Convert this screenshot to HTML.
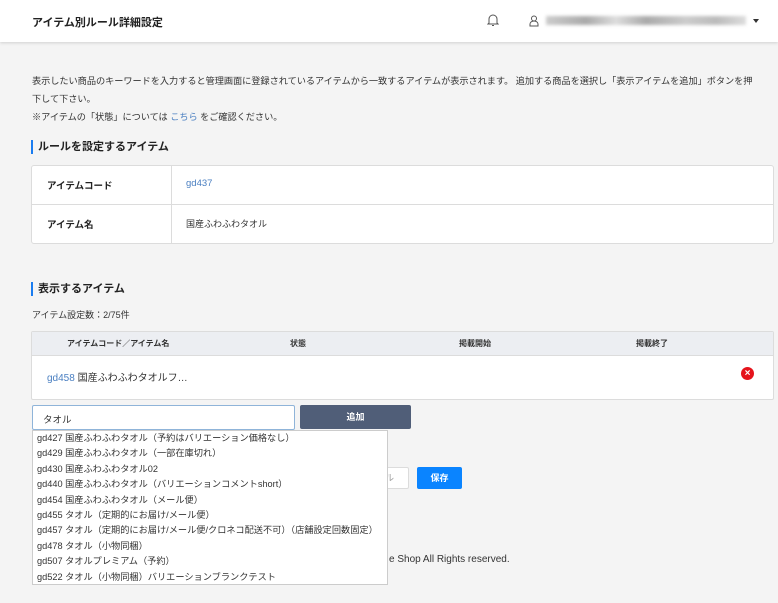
<!DOCTYPE html>
<html><head><meta charset="utf-8"><style>
*{box-sizing:border-box;margin:0;padding:0}
body{width:778px;height:603px;overflow:hidden;background:#f4f4f4;font-family:"Liberation Sans","Noto Sans CJK JP",sans-serif;color:#333;position:relative}
.abs{position:absolute}
.hdr{left:0;top:0;width:778px;height:42px;background:#fff;box-shadow:0 1px 3px rgba(0,0,0,.15)}
.t{font-size:9.5px;white-space:nowrap}
.h2{font-size:11px;font-weight:bold;border-left:2px solid #1a7cf0;padding-left:5px;line-height:14px;color:#222}
.box{background:#fff;border:1px solid #dcdcdc;border-radius:3px}
.dd div{height:15.4px;line-height:15.4px;padding-left:4px;font-size:9.2px;color:#333;white-space:nowrap}
</style></head><body>
<div class="abs hdr"></div>
<div class="abs" style="left:32px;top:14px;font-size:11px;font-weight:bold;color:#222">アイテム別ルール詳細設定</div>
<svg class="abs" style="left:487px;top:13px" width="12" height="14" viewBox="0 0 12 14"><path d="M2 10V6a4 4 0 0 1 8 0v4l1 1H1z M5 12.5h2" fill="none" stroke="#555" stroke-width="1"/></svg>
<svg class="abs" style="left:529px;top:15px" width="10" height="12" viewBox="0 0 10 12"><circle cx="5" cy="3.5" r="2.5" fill="none" stroke="#555"/><path d="M1 11V9a4 3 0 0 1 8 0v2z" fill="none" stroke="#555"/></svg>
<div class="abs" style="left:546px;top:16px;width:200px;height:9px;background:linear-gradient(90deg,#ccc,#aaa 20%,#ddd 35%,#aaa 50%,#ccc 70%,#bbb 85%,#ddd);filter:blur(1.5px)"></div>
<div class="abs" style="left:753px;top:19px;width:0;height:0;border-left:3.5px solid transparent;border-right:3.5px solid transparent;border-top:4px solid #333"></div>
<div class="abs t" style="left:32px;top:72px;line-height:18px;font-size:9.2px;letter-spacing:-0.05px">表示したい商品のキーワードを入力すると管理画面に登録されているアイテムから一致するアイテムが表示されます。 追加する商品を選択し「表示アイテムを追加」ボタンを押<br>下して下さい。<br>※アイテムの「状態」については <span style="color:#4a7fc1">こちら</span> をご確認ください。</div>
<div class="abs h2" style="left:31px;top:140px">ルールを設定するアイテム</div>
<div class="abs box" style="left:31px;top:165px;width:743px;height:79px"></div>
<div class="abs" style="left:32px;top:204px;width:741px;height:1px;background:#dcdcdc"></div>
<div class="abs" style="left:171px;top:166px;width:1px;height:77px;background:#dcdcdc"></div>
<div class="abs t" style="left:47px;top:178px;font-weight:bold;color:#222">アイテムコード</div>
<div class="abs t" style="left:186px;top:178px;color:#4a7fc1">gd437</div>
<div class="abs t" style="left:47px;top:217px;font-weight:bold;color:#222">アイテム名</div>
<div class="abs t" style="left:186px;top:217px;font-size:9px">国産ふわふわタオル</div>
<div class="abs h2" style="left:31px;top:282px">表示するアイテム</div>
<div class="abs t" style="left:32px;top:308px;font-size:9px">アイテム設定数：2/75件</div>
<div class="abs box" style="left:31px;top:331px;width:743px;height:69px;border-radius:2px"></div>
<div class="abs" style="left:32px;top:332px;width:741px;height:24px;background:#eceef2;border-bottom:1px solid #dcdcdc"></div>
<div class="abs t" style="left:67px;top:338px;font-size:8px;font-weight:bold">アイテムコード／アイテム名</div>
<div class="abs t" style="left:290px;top:338px;font-size:8px;font-weight:bold">状態</div>
<div class="abs t" style="left:459px;top:338px;font-size:8px;font-weight:bold">掲載開始</div>
<div class="abs t" style="left:636px;top:338px;font-size:8px;font-weight:bold">掲載終了</div>
<div class="abs t" style="left:47px;top:369px;font-size:10px"><span style="color:#4a7fc1">gd458</span> 国産ふわふわタオルフ…</div>
<div class="abs" style="left:741px;top:367px;width:13px;height:13px;border-radius:50%;background:#e5141c;color:#fff;font-size:10px;font-weight:bold;line-height:13px;text-align:center">×</div>
<div class="abs" style="left:32px;top:405px;width:263px;height:25px;background:#fff;border:1px solid #8fb4d9;border-radius:2px;font-size:9.5px;padding:6px 10px">タオル</div>
<div class="abs" style="left:300px;top:405px;width:111px;height:24px;background:#505e78;border-radius:2px;color:#fff;font-size:9px;font-weight:bold;text-align:center;line-height:24px">追加</div>
<div class="abs" style="left:360px;top:467px;width:49px;height:22px;background:#fff;border:1px solid #dcdcdc;border-radius:2px;font-size:9px;color:#999;line-height:20px;text-align:right;padding-right:14px">ル</div>
<div class="abs" style="left:417px;top:467px;width:45px;height:22px;background:#0a84ff;border-radius:2px;color:#fff;font-size:9px;font-weight:bold;line-height:22px;text-align:center">保存</div>
<div class="abs t" style="left:389px;top:554px;font-size:10px">e Shop All Rights reserved.</div>
<div class="abs dd" style="left:32px;top:430px;width:356px;height:155px;background:#fff;border:1px solid #ccc;padding-top:0">
<div>gd427 国産ふわふわタオル（予約はバリエーション価格なし）</div>
<div>gd429 国産ふわふわタオル（一部在庫切れ）</div>
<div>gd430 国産ふわふわタオル02</div>
<div>gd440 国産ふわふわタオル（バリエーションコメントshort）</div>
<div>gd454 国産ふわふわタオル（メール便）</div>
<div>gd455 タオル（定期的にお届け/メール便）</div>
<div>gd457 タオル（定期的にお届け/メール便/クロネコ配送不可）（店舗設定回数固定）</div>
<div>gd478 タオル（小物同梱）</div>
<div>gd507 タオルプレミアム（予約）</div>
<div>gd522 タオル（小物同梱）バリエーションブランクテスト</div>
</div>
</body></html>
